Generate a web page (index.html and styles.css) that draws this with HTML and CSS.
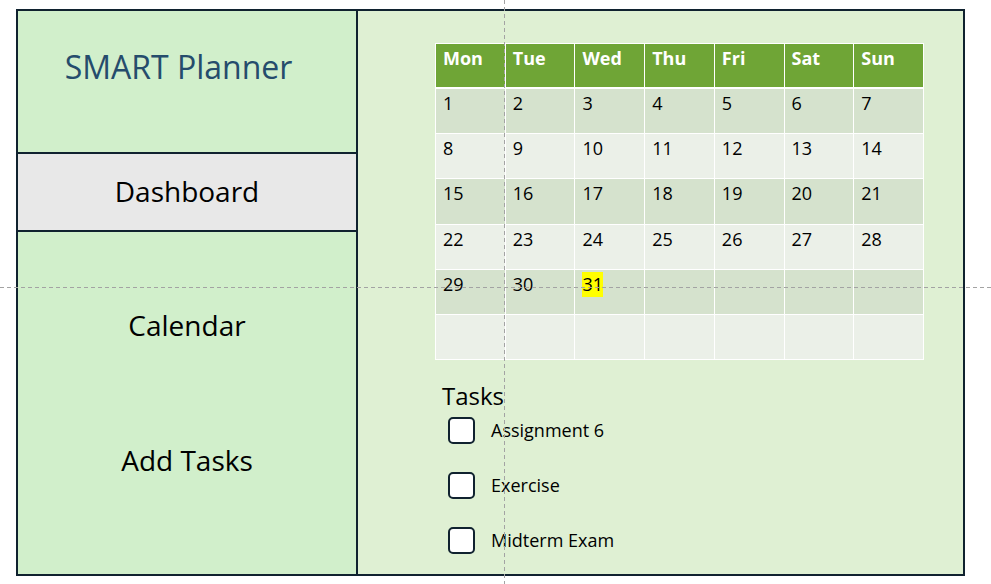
FILE: index.html
```html
<!DOCTYPE html>
<html lang="en">
<head>
<meta charset="utf-8">
<title>SMART Planner</title>
<link rel="stylesheet" href="styles.css">
</head>
<body>
<div class="frame">
  <aside class="sidebar">
    <div class="brand">SMART Planner</div>
    <div class="nav-active">Dashboard</div>
    <div class="nav-rest">
      <div class="nav-item nav-calendar">Calendar</div>
      <div class="nav-item nav-add">Add Tasks</div>
    </div>
  </aside>
  <main class="main">
    <div class="calendar">
      <div class="hd">Mon</div><div class="hd">Tue</div><div class="hd">Wed</div><div class="hd">Thu</div><div class="hd">Fri</div><div class="hd">Sat</div><div class="hd">Sun</div>
      <div class="c odd">1</div><div class="c odd">2</div><div class="c odd">3</div><div class="c odd">4</div><div class="c odd">5</div><div class="c odd">6</div><div class="c odd">7</div>
      <div class="c even">8</div><div class="c even">9</div><div class="c even">10</div><div class="c even">11</div><div class="c even">12</div><div class="c even">13</div><div class="c even">14</div>
      <div class="c odd">15</div><div class="c odd">16</div><div class="c odd">17</div><div class="c odd">18</div><div class="c odd">19</div><div class="c odd">20</div><div class="c odd">21</div>
      <div class="c even">22</div><div class="c even">23</div><div class="c even">24</div><div class="c even">25</div><div class="c even">26</div><div class="c even">27</div><div class="c even">28</div>
      <div class="c odd">29</div><div class="c odd">30</div><div class="c odd"><span class="today">31</span></div><div class="c odd"></div><div class="c odd"></div><div class="c odd"></div><div class="c odd"></div>
      <div class="c even"></div><div class="c even"></div><div class="c even"></div><div class="c even"></div><div class="c even"></div><div class="c even"></div><div class="c even"></div>
    </div>
    <section class="tasks">
      <div class="tasks-title">Tasks</div>
      <ul class="task-list">
        <li class="task"><span class="box"></span><span class="label">Assignment 6</span></li>
        <li class="task"><span class="box"></span><span class="label">Exercise</span></li>
        <li class="task"><span class="box"></span><span class="label">Midterm Exam</span></li>
      </ul>
    </section>
  </main>
</div>
<div class="guide guide-v"></div>
<div class="guide guide-h"></div>
</body>
</html>
```

FILE: styles.css
```css
html, body {
  margin: 0;
  padding: 0;
  background: #ffffff;
}
body {
  position: relative;
  width: 991px;
  height: 584px;
  overflow: hidden;
  font-family: "Open Sans", "Liberation Sans", sans-serif;
  font-weight: 500;
  color: #000;
}
.frame {
  margin: 9px 0 0 16px;
  width: 949px;
  height: 567px;
  box-sizing: border-box;
  border: 2px solid #10222f;
  display: grid;
  grid-template-columns: 340px 1fr;
}
.sidebar {
  box-sizing: border-box;
  border-right: 2px solid #10222f;
  background: #d1efcb;
  display: flex;
  flex-direction: column;
}
.brand {
  box-sizing: border-box;
  height: 143px;
  border-bottom: 2px solid #10222f;
  padding: 36px 17px 0 0;
  text-align: center;
  font-size: 32px;
  line-height: 40px;
  color: #254c6c;
}
.nav-active {
  box-sizing: border-box;
  height: 78px;
  border-bottom: 2px solid #10222f;
  background: #e8e8e8;
  display: flex;
  align-items: center;
  justify-content: center;
  padding-bottom: 3px;
  font-size: 28px;
  line-height: 36px;
}
.nav-rest {
  flex: 1;
  display: flex;
  flex-direction: column;
  align-items: center;
  padding-top: 75px;
}
.nav-item {
  font-size: 28px;
  line-height: 36px;
}
.nav-add {
  margin-top: 99px;
}
.main {
  background: #dff0d3;
  padding: 32px 0 0 77px;
}
.calendar {
  width: 489px;
  box-sizing: border-box;
  padding: 1px;
  background: #ffffff;
  display: grid;
  grid-template-columns: repeat(7, 1fr);
  grid-template-rows: 44px repeat(6, 44.2px);
  gap: 1px;
}
.hd {
  box-sizing: border-box;
  background: #6fa536;
  border-bottom: 1px solid #ffffff;
  color: #ffffff;
  font-weight: 700;
  font-size: 18px;
  line-height: 25px;
  padding: 2px 0 0 7px;
}
.c {
  font-size: 18px;
  line-height: 25px;
  padding: 2px 0 0 7px;
}
.odd { background: #d5e2cd; }
.even { background: #ebf0e8; }
.today {
  display: inline-block;
  background: #ffff00;
  line-height: 25px;
}
.tasks {
  margin: 20px 0 0 7px;
}
.tasks-title {
  font-size: 24px;
  line-height: 31px;
}
.task-list {
  list-style: none;
  margin: 6px 0 0 6px;
  padding: 0;
  display: flex;
  flex-direction: column;
  gap: 28px;
}
.task {
  display: flex;
  align-items: center;
  height: 27px;
  gap: 16px;
}
.box {
  box-sizing: border-box;
  width: 27px;
  height: 27px;
  border: 2px solid #10222f;
  border-radius: 5px;
  background: #ffffff;
}
.label {
  font-size: 18px;
  line-height: 24px;
  position: relative;
  top: -1px;
}
.guide {
  position: absolute;
  z-index: 5;
}
.guide-v {
  left: 504px;
  top: 0;
  width: 1px;
  height: 584px;
  background: repeating-linear-gradient(to bottom, #a3a3a3 0 4px, transparent 4px 7px);
}
.guide-h {
  left: 0;
  top: 287px;
  width: 991px;
  height: 1px;
  background: repeating-linear-gradient(to right, #a3a3a3 0 4px, transparent 4px 7px);
}
```
